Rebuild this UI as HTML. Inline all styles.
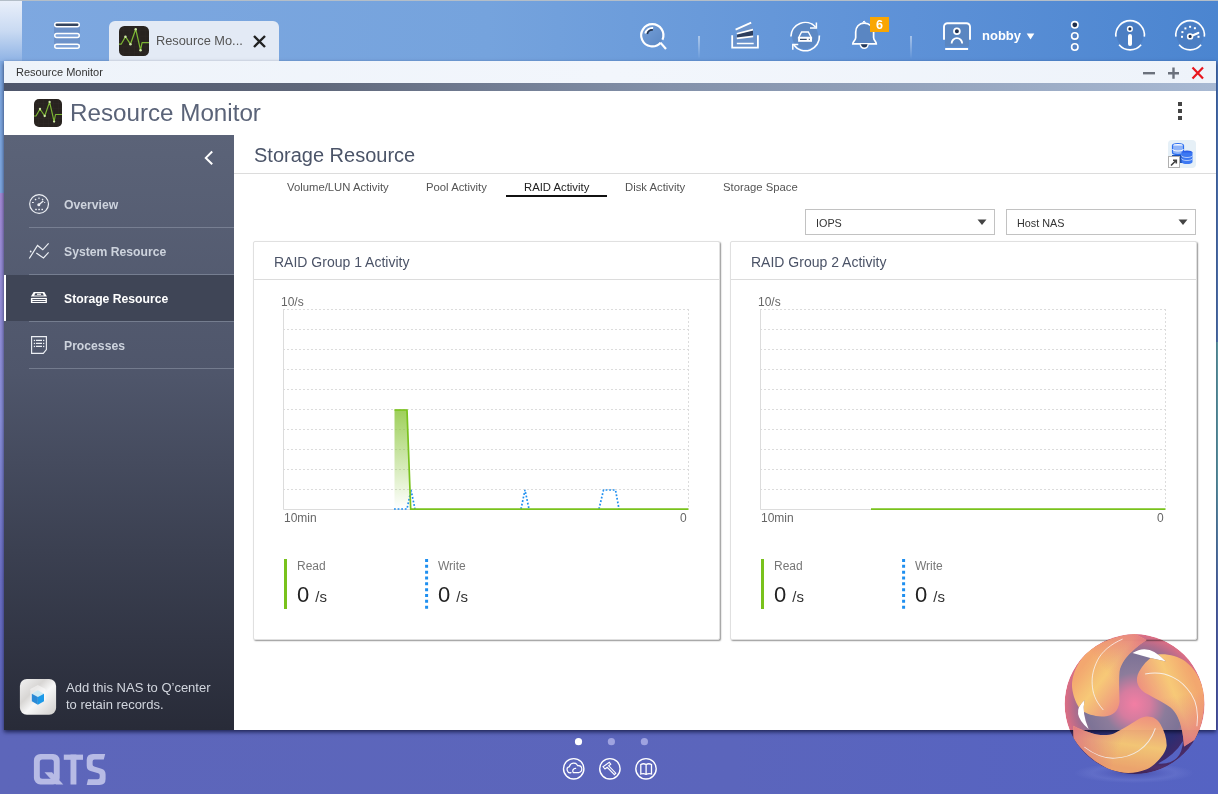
<!DOCTYPE html>
<html><head><meta charset="utf-8">
<style>
*{margin:0;padding:0;box-sizing:border-box;}
html,body{width:1218px;height:794px;overflow:hidden;}
body{position:relative;font-family:"Liberation Sans",sans-serif;background:#5f67bc;}
.a{position:absolute;}
.t{position:absolute;white-space:nowrap;line-height:1;}
#desk{left:0;top:0;width:1218px;height:794px;
 background:linear-gradient(180deg,#7ea8e0 0px,#7ea8e0 193px,#a68ad5 193px,#9a8fd8 260px,#8a90da 420px,#6d70c6 580px,#5f67bc 700px,#5f67bc 794px);}
#topbar{left:0;top:0;width:1218px;height:61px;
 background:linear-gradient(90deg,#7ea8e0 0%,#75a3dd 40%,#5d91d7 75%,#4b85d0 100%);}
#bottom{left:0;top:730px;width:1218px;height:64px;background:linear-gradient(90deg,#5d66ba 0%,#5b65bc 60%,#5563c3 100%);}
#win{left:4px;top:61px;width:1212px;height:669px;background:#fff;box-shadow:0 2px 4px rgba(10,15,50,.75);}
#wtitle{left:4px;top:61px;width:1212px;height:22px;background:linear-gradient(90deg,#eef3fa 0%,#f2f6fc 50%,#eef3fa 100%);}
#wbar{left:4px;top:83px;width:1212px;height:8px;background:linear-gradient(90deg,#4e566b 0%,#5f677a 25%,#8391aa 55%,#a8b9d3 100%);}
#side{left:4px;top:135px;width:230px;height:595px;background:linear-gradient(180deg,#5b6378 0%,#4f566b 40%,#3b4051 70%,#282b38 100%);}
.sep{position:absolute;left:29px;width:205px;height:1px;background:rgba(160,168,185,.45);}
.nav{position:absolute;left:64px;margin-top:1px;font-size:12.2px;font-weight:bold;color:#cdd3dd;line-height:1;white-space:nowrap;}
.panel{position:absolute;top:241px;width:467px;height:399px;background:#fff;border:1px solid #e0e0e0;border-radius:2px;box-shadow:1px 1px 1.5px rgba(0,0,0,.42);}
.tab{position:absolute;top:182px;font-size:11.3px;color:#555;line-height:1;white-space:nowrap;}
.dd{position:absolute;top:209px;width:190px;height:26px;border:1px solid #c2c2c2;background:#fff;}
.dd span{position:absolute;left:10px;top:7px;font-size:10.8px;color:#333;}
.ptitle{position:absolute;top:255px;font-size:14px;color:#4b5367;line-height:1;white-space:nowrap;}
.lbl{position:absolute;font-size:12px;color:#666;line-height:1;white-space:nowrap;}
</style></head><body>
<div id="desk" class="a"></div>
<div id="topbar" class="a"></div>
<div class="a" style="left:0;top:0;width:1218px;height:1px;background:#b4bec8;"></div>
<div class="a" style="left:0;top:1px;width:22px;height:60px;background:linear-gradient(180deg,#e9effa 0%,#c9daf2 50%,#8fb3e5 100%);"></div>
<div id="bottom" class="a"></div>

<!-- tab -->
<div class="a" style="left:109px;top:21px;width:170px;height:40px;background:#e3eaf5;border-radius:6px 6px 0 0;"></div>
<div class="t" style="left:156px;top:35px;font-size:12.8px;color:#555;">Resource Mo...</div>

<div class="a" style="left:1216px;top:61px;width:2px;height:669px;background:linear-gradient(180deg,#4f7dc3 0px,#5a80bf 281px,#6cb0b5 281px,#68aab5 420px,#5a70b8 540px,#5660b8 669px);"></div>
<div id="win" class="a"></div>
<div id="wtitle" class="a"></div>
<div class="t" style="left:16px;top:67px;font-size:11px;color:#333;">Resource Monitor</div>
<div id="wbar" class="a"></div>

<div id="side" class="a"></div>
<div class="sep" style="top:227px"></div>
<div class="sep" style="top:274px"></div>
<div class="sep" style="top:321px"></div>
<div class="sep" style="top:368px"></div>
<div class="a" style="left:4px;top:275px;width:230px;height:46px;background:#3f4556;"></div>
<div class="a" style="left:4px;top:275px;width:2px;height:46px;background:#fff;"></div>
<div class="nav" style="top:198px">Overview</div>
<div class="nav" style="top:245px">System Resource</div>
<div class="nav" style="top:292px;color:#fff">Storage Resource</div>
<div class="nav" style="top:339px">Processes</div>
<div class="t" style="left:66px;top:679px;font-size:13px;color:#d2d6de;line-height:17px;">Add this NAS to Q’center<br>to retain records.</div>

<div class="t" style="left:70px;top:101px;font-size:24.2px;color:#5a6378;">Resource Monitor</div>
<div class="t" style="left:254px;top:145px;font-size:20px;color:#4b5468;">Storage Resource</div>
<div class="a" style="left:234px;top:173px;width:982px;height:1px;background:#dcdcdc;"></div>

<div class="tab" style="left:287px">Volume/LUN Activity</div>
<div class="tab" style="left:426px">Pool Activity</div>
<div class="tab" style="left:524px;color:#222">RAID Activity</div>
<div class="tab" style="left:625px">Disk Activity</div>
<div class="tab" style="left:723px">Storage Space</div>
<div class="a" style="left:506px;top:195px;width:101px;height:2px;background:#111;"></div>

<div class="dd" style="left:805px"><span>IOPS</span></div>
<div class="dd" style="left:1006px"><span>Host NAS</span></div>

<div class="panel" style="left:253px"></div>
<div class="panel" style="left:730px"></div>
<div class="a" style="left:254px;top:279px;width:465px;height:1px;background:#dcdcdc;"></div>
<div class="a" style="left:731px;top:279px;width:465px;height:1px;background:#dcdcdc;"></div>
<div class="ptitle" style="left:274px">RAID Group 1 Activity</div>
<div class="ptitle" style="left:751px">RAID Group 2 Activity</div>

<div class="lbl" style="left:281px;top:296px">10/s</div>
<div class="lbl" style="left:284px;top:512px">10min</div>
<div class="lbl" style="left:680px;top:512px">0</div>
<div class="lbl" style="left:758px;top:296px">10/s</div>
<div class="lbl" style="left:761px;top:512px">10min</div>
<div class="lbl" style="left:1157px;top:512px">0</div>


<div class="t" style="left:982px;top:29px;font-size:13px;font-weight:bold;color:#fff;">nobby</div>
<div class="lbl" style="left:297px;top:560px;color:#777">Read</div>
<div class="lbl" style="left:438px;top:560px;color:#777">Write</div>
<div class="lbl" style="left:774px;top:560px;color:#777">Read</div>
<div class="lbl" style="left:915px;top:560px;color:#777">Write</div>
<div class="t" style="left:297px;top:584px;font-size:22px;color:#222;">0 <span style="font-size:15px;color:#333">/s</span></div>
<div class="t" style="left:438px;top:584px;font-size:22px;color:#222;">0 <span style="font-size:15px;color:#333">/s</span></div>
<div class="t" style="left:774px;top:584px;font-size:22px;color:#222;">0 <span style="font-size:15px;color:#333">/s</span></div>
<div class="t" style="left:915px;top:584px;font-size:22px;color:#222;">0 <span style="font-size:15px;color:#333">/s</span></div>

<svg class="a" style="left:0;top:0" width="1218" height="794" viewBox="0 0 1218 794">
<defs>
 <symbol id="rmicon" viewBox="0 0 28 28">
  <rect x="0" y="0" width="28" height="28" rx="5" fill="#28231f"/>
  <g stroke="#3a3532" stroke-width=".4" opacity=".5">
   <path d="M4.5 0V28M9.5 0V28M14.5 0V28M19.5 0V28M24.5 0V28M0 4.5H28M0 9.5H28M0 14.5H28M0 19.5H28M0 24.5H28"/>
  </g>
  <polyline points="0,17 2,17 6,10 10.7,17 15.6,3 20.1,22.6 21.5,15.5 28,15.5" fill="none" stroke="#7cb534" stroke-width="1.15" stroke-linejoin="round"/>
  <g fill="#d0e8a8"><circle cx="6" cy="10" r="1.15"/><circle cx="10.7" cy="17" r="1.15"/><circle cx="15.6" cy="3" r="1.15"/><circle cx="20.1" cy="22.6" r="1.15"/></g>
 </symbol>
 <linearGradient id="gfill" x1="0" y1="0" x2="0" y2="1">
  <stop offset="0" stop-color="#8cc73c" stop-opacity=".85"/>
  <stop offset="1" stop-color="#8cc73c" stop-opacity="0"/>
 </linearGradient>
 <linearGradient id="sepg" x1="0" y1="0" x2="0" y2="1">
  <stop offset="0" stop-color="#fff" stop-opacity=".9"/>
  <stop offset="1" stop-color="#fff" stop-opacity="0"/>
 </linearGradient>
</defs>

<!-- hamburger -->
<rect x="54" y="26" width="26" height="18" fill="#6a8ec6" opacity=".85"/>
<rect x="54.75" y="22.75" width="24.5" height="4" rx="2" fill="#34445e" stroke="#fff" stroke-width="1.5"/>
<rect x="54.75" y="33.5" width="24.5" height="4" rx="2" fill="#7ea2d8" stroke="#fff" stroke-width="1.5"/>
<rect x="54.75" y="44.25" width="24.5" height="4" rx="2" fill="#7ea2d8" stroke="#fff" stroke-width="1.5"/>

<!-- tab icon + close -->
<use href="#rmicon" x="119" y="26" width="30" height="30"/>
<path d="M254 36L265 47M265 36L254 47" stroke="#222" stroke-width="2.4"/>

<!-- search -->
<defs><linearGradient id="srchg" x1="0" y1="0" x2="1" y2="1"><stop offset="0" stop-color="#76a0d9"/><stop offset="1" stop-color="#5a87c3"/></linearGradient></defs>
<circle cx="652.3" cy="35.3" r="11" fill="url(#srchg)"/>
<path d="M660.57 42.7A11.1 11.1 0 1 1 662.46 39.76" fill="none" stroke="#fff" stroke-width="2.2"/>
<path d="M660.4 42.6L666 49" stroke="#fff" stroke-width="2.2"/>
<path d="M645.3 33.6A7.2 7.2 0 0 1 653.1 28.1" fill="none" stroke="#fff" stroke-width="2"/>
<path d="M647.3 33.9A5.4 5.4 0 0 1 652.9 30" fill="none" stroke="#26354f" stroke-width="1.7"/>

<rect x="698.5" y="36" width="1" height="23" fill="url(#sepg)"/>
<rect x="910.5" y="36" width="1" height="23" fill="url(#sepg)"/>

<!-- tray -->
<rect x="733" y="36" width="24" height="11" fill="#6a92cb"/>
<polygon points="736,30 751,23 753,30 737,34" fill="#6d95cd"/>
<polygon points="737,34 753,30 753,36.4 737,38.2" fill="#2d3e5e"/>
<path d="M735.6 29.6L751.2 22.6M736.8 33.8L753 29.6M736.8 38.4L753.2 36.4" stroke="#fff" stroke-width="1.7"/>
<path d="M736.8 43.5H753.7" stroke="#fff" stroke-width="1.5"/>
<path d="M732.2 35.2V47.7H757.9V35.2" fill="none" stroke="#fff" stroke-width="1.8"/>

<!-- sync -->
<circle cx="805.1" cy="36" r="13" fill="#5d89c4"/>
<path d="M790.9 36.6A14.2 14.2 0 0 1 815.5 27" fill="none" stroke="#fff" stroke-width="1.6"/>
<path d="M819.4 35.5A14.2 14.2 0 0 1 793.8 45" fill="none" stroke="#fff" stroke-width="1.6"/>
<path d="M816.4 22.5V28H810M792.8 49.7V44.5H798.3" fill="none" stroke="#fff" stroke-width="1.5"/>
<path d="M801.6 32H808.3L811.3 37.5H798.7Z" fill="none" stroke="#fff" stroke-width="1.4"/>
<rect x="798.1" y="37" width="13.9" height="4.8" fill="#fff"/>
<rect x="800" y="38.8" width="6.7" height="1.1" fill="#23395b"/>
<rect x="808.8" y="38.8" width="1" height="1.1" fill="#23395b"/>

<!-- bell -->
<path d="M864.1 23.2C859 23.2 855.7 27 855.7 32V37.5C855.7 40.5 852.8 41.5 852.8 43.9H876.3C876.3 41.5 873.6 40.5 873.6 37.5V32C873.6 27 869.3 23.2 864.1 23.2Z" fill="#5a86c2" stroke="#fff" stroke-width="1.7"/>
<path d="M862.5 22.5L864.1 21L865.7 22.5" fill="#fff" stroke="#fff" stroke-width="1"/>
<path d="M860.3 44.3A3.9 4 0 0 0 868.1 44.3" fill="#23395b" stroke="#fff" stroke-width="1.5"/>
<rect x="870" y="17" width="19" height="15" fill="#f9a602"/>
<text x="879.5" y="29" font-family="Liberation Sans" font-size="12.5" font-weight="bold" fill="#fff" text-anchor="middle">6</text>

<!-- user -->
<rect x="945" y="24.1" width="24.1" height="22.5" fill="#5a86c1"/>
<path d="M944 39.7V26.7A3.5 3.5 0 0 1 947.5 23.2H966.5A3.5 3.5 0 0 1 970 26.7V39.7" fill="none" stroke="#fff" stroke-width="1.9"/>
<rect x="945.2" y="48" width="22.9" height="2" fill="#fff"/>
<circle cx="956.9" cy="31.3" r="2.9" fill="#1f2f4d" stroke="#fff" stroke-width="1.8"/>
<path d="M951.6 43.5A5.3 5.3 0 0 1 962.2 43.5" fill="none" stroke="#fff" stroke-width="1.8"/>
<path d="M1026.7 33.5H1034.3L1030.5 39.5Z" fill="#fff"/>

<!-- dots -->
<rect x="1071" y="25" width="7.6" height="22" fill="#4f7fc0" opacity=".6"/>
<circle cx="1074.8" cy="24.8" r="3.2" fill="#1f2f4d" stroke="#fff" stroke-width="1.6"/>
<circle cx="1074.8" cy="35.9" r="3.2" fill="#5582c3" stroke="#fff" stroke-width="1.6"/>
<circle cx="1074.8" cy="47" r="3.2" fill="#5582c3" stroke="#fff" stroke-width="1.6"/>

<!-- info -->
<circle cx="1130.1" cy="35.7" r="13.2" fill="#4b7ec3"/>
<path d="M1115.9 36.6A14.3 14.3 0 1 1 1144.3 36.6" fill="none" stroke="#fff" stroke-width="1.6"/>
<path d="M1119.1 44.7A14.3 14.3 0 0 0 1141.1 44.7" fill="none" stroke="#fff" stroke-width="1.6"/>
<circle cx="1129.9" cy="28.9" r="2.3" fill="#1f2f4d" stroke="#fff" stroke-width="1.5"/>
<path d="M1130 36V44" stroke="#fff" stroke-width="4" stroke-linecap="round"/>

<!-- dashboard -->
<circle cx="1190.1" cy="35.7" r="13.2" fill="#4b7ec3"/>
<path d="M1175.9 36.6A14.3 14.3 0 1 1 1204.3 36.6" fill="none" stroke="#fff" stroke-width="1.6"/>
<path d="M1179.1 44.7A14.3 14.3 0 0 0 1201.1 44.7" fill="none" stroke="#fff" stroke-width="1.6"/>
<g fill="#fff"><rect x="1181" y="35.8" width="2" height="2"/><rect x="1181.4" y="31.1" width="2" height="2"/><rect x="1184.4" y="27.4" width="2" height="2"/><rect x="1189.1" y="25.8" width="2" height="2"/><rect x="1193.9" y="27.2" width="2" height="2"/><rect x="1197.5" y="35.8" width="2" height="2"/></g>
<path d="M1190.1 36.4L1198.3 33" stroke="#fff" stroke-width="2.2" stroke-linecap="round"/>
<circle cx="1190.1" cy="36.4" r="2.4" fill="#1f2f4d" stroke="#fff" stroke-width="1.6"/>

<!-- window buttons -->
<rect x="1143" y="72" width="12" height="2.4" fill="#6b717c"/>
<path d="M1168 73.2H1179M1173.5 67.5V78.7" stroke="#6b717c" stroke-width="2.4"/>
<path d="M1192.5 67.5L1203 78.5M1203 67.5L1192.5 78.5" stroke="#e8161e" stroke-width="2.2"/>

<!-- big app icon -->
<use href="#rmicon" x="34" y="99" width="28" height="28"/>
<g fill="#444"><rect x="1178" y="102" width="4" height="4"/><rect x="1178" y="109" width="4" height="4"/><rect x="1178" y="116" width="4" height="4"/></g>

<!-- sidebar chevron + icons -->
<path d="M212.2 151.5L205.8 157.9L212.2 164.3" fill="none" stroke="#fff" stroke-width="2"/>
<g stroke="#eceff4" fill="none" stroke-width="1.2">
 <circle cx="39.1" cy="204" r="9.4"/>
 <path d="M32 202.5H33.8M35 199L36.2 200.2M39 197.5V199M43.1 199L42 200.2M45.2 202.5H44.2"/>
 <path d="M38.8 204.7L43.3 201" stroke-width="1.4"/>
 <path d="M29.3 258.5L37.5 245.5L42.8 249.8L48.6 243.4M36.3 253.1L43.5 258L48.6 252.3"/>
</g>
<g fill="#eceff4"><circle cx="38.8" cy="204.7" r="1.5"/><rect x="35.2" y="208.8" width="1.6" height="1.4"/><rect x="38.3" y="208.8" width="1.6" height="1.4"/><rect x="41.4" y="208.8" width="1.6" height="1.4"/><circle cx="30.7" cy="251.5" r=".9"/></g>
<g>
 <path d="M33.7 291.9H44.3L46.9 296.4H30.9Z" fill="#fff"/>
 <path d="M35.4 293.3H42.8L43.8 295.4H34.2Z" fill="#3f4556"/>
 <rect x="37" y="293.6" width="4" height="1.4" fill="#ddd"/>
 <rect x="30.9" y="297.9" width="16" height="5.1" fill="#fff"/>
 <path d="M32.4 299.5H45.6M32.4 301.5H45.6" stroke="#3f4556" stroke-width=".9"/>
</g>
<g stroke="#eceff4" fill="none" stroke-width="1.15">
 <path d="M31.6 336.6H46.4V349.5L43.3 353.4H31.6Z"/>
 <path d="M36 340.4H42M36 343.4H42M36 346.4H42" stroke-width="1.3"/>
</g>
<g fill="#eceff4"><rect x="33.8" y="339.8" width="1.3" height="1.3"/><rect x="43" y="339.8" width="1.3" height="1.3"/><rect x="33.8" y="342.8" width="1.3" height="1.3"/><rect x="43" y="342.8" width="1.3" height="1.3"/><rect x="33.8" y="345.8" width="1.3" height="1.3"/><rect x="43" y="345.8" width="1.3" height="1.3"/></g>

<!-- storage resource shortcut icon -->
<rect x="1168" y="140" width="28" height="28" rx="4" fill="#e6f0f7"/>
<g>
 <ellipse cx="1178" cy="145.5" rx="5.5" ry="2" fill="#fff" stroke="#2a6ef0" stroke-width="1.2"/>
 <path d="M1172.5 145.5V152.5A5.5 2 0 0 0 1183.5 152.5V145.5" fill="#8fb4f8" stroke="#2a6ef0" stroke-width="1.2"/>
 <path d="M1172.5 149A5.5 2 0 0 0 1183.5 149" fill="none" stroke="#fff" stroke-width="1"/>
 <rect x="1172" y="155" width="12" height="8" fill="#1d4fb0"/>
 <ellipse cx="1187" cy="152.5" rx="5.5" ry="2" fill="#2a5ee8"/>
 <path d="M1181.5 152.5V162A5.5 2 0 0 0 1192.5 162V152.5" fill="#3c78f2"/>
 <path d="M1181.5 155.5A5.5 2 0 0 0 1192.5 155.5M1181.5 158.5A5.5 2 0 0 0 1192.5 158.5" fill="none" stroke="#bcd3fb" stroke-width=".9"/>
 <rect x="1168.5" y="156.5" width="11" height="11" fill="#fff" stroke="#b0b0b0" stroke-width="1"/>
 <path d="M1171 165.5L1176 160.5M1173 160.3H1176.3V163.6" fill="none" stroke="#444" stroke-width="1.6"/>
</g>

<!-- dropdown arrows -->
<path d="M977.5 219.5H986.5L982 225Z" fill="#444"/>
<path d="M1178.5 219.5H1187.5L1183 225Z" fill="#444"/>

<!-- charts: panel 1 -->
<g stroke="#dcdcdc" stroke-width="1" stroke-dasharray="2 2" fill="none">
 <path d="M283 309.5H688M283 329.5H688M283 349.5H688M283 369.5H688M283 389.5H688M283 409.5H688M283 429.5H688M283 449.5H688M283 469.5H688M283 489.5H688"/>
 <path d="M688.5 309V509"/>
 <path d="M760 309.5H1165M760 329.5H1165M760 349.5H1165M760 369.5H1165M760 389.5H1165M760 409.5H1165M760 429.5H1165M760 449.5H1165M760 469.5H1165M760 489.5H1165"/>
 <path d="M1165.5 309V509"/>
</g>
<path d="M283.5 309V509.5H688" fill="none" stroke="#dcdcdc" stroke-width="1"/>
<path d="M760.5 309V509.5H1165" fill="none" stroke="#dcdcdc" stroke-width="1"/>

<polygon points="394.5,509 394.5,409.5 407,409.5 411,509" fill="url(#gfill)"/>
<path d="M394 509H407L411 490L415 509M521 509L525 490L529 509M599 509L603.5 490H615.5L619 509" fill="none" stroke="#1e8ff0" stroke-width="1.7" stroke-dasharray="1.8 1.8"/>
<path d="M394.5 410H407L410.7 509.2H688.5" fill="none" stroke="#79c21c" stroke-width="1.7"/>
<path d="M871 509.2H1165.5" fill="none" stroke="#79c21c" stroke-width="1.7"/>

<!-- legends -->
<rect x="284" y="559" width="3" height="50" fill="#79c21c"/>
<path d="M426.6 559V610" stroke="#1e8ff0" stroke-width="3" stroke-dasharray="3 2.83"/>
<rect x="761" y="559" width="3" height="50" fill="#79c21c"/>
<path d="M903.6 559V610" stroke="#1e8ff0" stroke-width="3" stroke-dasharray="3 2.83"/>

<!-- q'center icon -->
<defs>
 <linearGradient id="silver" x1="0" y1="0" x2="1" y2="1">
  <stop offset="0" stop-color="#f2f2f2"/><stop offset=".35" stop-color="#d8d6d4"/><stop offset=".55" stop-color="#f7f7f7"/><stop offset="1" stop-color="#cfcdcb"/>
 </linearGradient>
</defs>
<rect x="19.9" y="678.9" width="36.2" height="35.9" rx="7" fill="url(#silver)"/>
<polygon points="37.9,685 45.5,689 45.5,700 37.9,705 30.3,700 30.3,689" fill="#fff" opacity=".45"/>
<polygon points="37.9,690.2 44,693.7 37.9,697 31.8,693.7" fill="#cdeaf4"/>
<polygon points="31.8,693.7 37.9,697 37.9,704.7 31.8,701.2" fill="#2a8ad6"/>
<polygon points="44,693.7 37.9,697 37.9,704.7 44,701.2" fill="#1d9ae8"/>

<!-- QTS -->
<g fill="#b7bbe5">
 <path fill-rule="evenodd" d="M40.4 753.9H53.2A6.5 6.5 0 0 1 59.7 760.4V778A6.5 6.5 0 0 1 53.2 784.5H40.4A6.5 6.5 0 0 1 33.9 778V760.4A6.5 6.5 0 0 1 40.4 753.9ZM42.3 759.6H51.3A2.5 2.5 0 0 1 53.8 762.1V776.3A2.5 2.5 0 0 1 51.3 778.8H42.3A2.5 2.5 0 0 1 39.8 776.3V762.1A2.5 2.5 0 0 1 42.3 759.6Z"/>
 <polygon points="44.5,772.3 52,772.3 63.3,784.5 55.8,784.5"/>
 <rect x="63.8" y="754.6" width="19.2" height="5.2"/>
 <rect x="70.5" y="754.6" width="5.9" height="29.9"/>
 <path d="M93 753.9H105.2L103.8 759.6H94.5Q92.6 759.6 92.6 761.5V764.5Q92.6 766 94.2 766.5L101.5 768.8Q105.6 770 105.6 774.5V779Q105.6 784.9 99.5 784.9H86.7L88 779.2H97.8Q99.7 779.2 99.7 777.3V775Q99.7 773.6 98.2 773.2L90.5 771Q86.7 770 86.7 765.5V760Q86.7 753.9 93 753.9Z"/>
</g>

<!-- pager dots + bottom icons -->
<circle cx="578.5" cy="741.7" r="3.6" fill="#fff"/>
<circle cx="611.4" cy="741.7" r="3.6" fill="#9fa3e0"/>
<circle cx="644.4" cy="741.7" r="3.6" fill="#9fa3e0"/>
<g fill="none" stroke="#fff" stroke-width="1.4">
 <circle cx="573.7" cy="768.8" r="10.2"/>
 <circle cx="609.9" cy="768.8" r="10.2"/>
 <circle cx="646" cy="768.8" r="10.2"/>
 <path d="M571 772.6A3.1 3.1 0 0 1 569.4 766.6A4.5 4.5 0 0 1 577.8 765.7A3 3 0 0 1 579 772.5H573.2A2.7 2.7 0 0 1 575.7 768.3" stroke-width="1.25" stroke-linecap="round"/>
 <path d="M603 766.7L609.3 762.3L610.8 764.2L608.7 765.9L615.8 773.2L614.4 774.7L607.2 767.3L605 769Z" stroke-width="1.1"/>
 <path d="M640.8 774V764.5Q643.5 763 646.1 764.5Q648.7 763 651.5 764.5V774Q648.7 773 646.1 774.3Q643.5 773 640.8 774ZM646.1 764.5V774.3" stroke-width="1.3"/>
</g>
</svg>

<svg class="a" style="left:1054px;top:624px" width="164" height="170" viewBox="0 0 164 170">
<defs>
 <radialGradient id="lg_base" cx="0" cy="0" r="70" gradientUnits="userSpaceOnUse">
  <stop offset="0" stop-color="#f27ea3"/>
  <stop offset=".22" stop-color="#d67c9f"/>
  <stop offset=".45" stop-color="#8c7c9b"/>
  <stop offset=".7" stop-color="#7d7396"/>
  <stop offset=".86" stop-color="#b06c8c"/>
  <stop offset="1" stop-color="#de6e84"/>
 </radialGradient>
 <radialGradient id="lg_shadow" cx="80" cy="149" r="60" gradientTransform="translate(0 149) scale(1 .17) translate(0 -149)" gradientUnits="userSpaceOnUse">
  <stop offset="0" stop-color="#3c4296" stop-opacity=".75"/>
  <stop offset=".45" stop-color="#5a64c0" stop-opacity=".4"/>
  <stop offset=".7" stop-color="#7480d4" stop-opacity=".35"/>
  <stop offset="1" stop-color="#7480d4" stop-opacity="0"/>
 </radialGradient>
 <linearGradient id="lg_lobe" x1="-58" y1="-30" x2="-14" y2="4" gradientUnits="userSpaceOnUse">
  <stop offset="0" stop-color="#f6ab6e"/>
  <stop offset=".42" stop-color="#ffcf76"/>
  <stop offset="1" stop-color="#f0907e"/>
 </linearGradient>
 <linearGradient id="lg_tail" x1="8" y1="-66" x2="-30" y2="-34" gradientUnits="userSpaceOnUse">
  <stop offset="0" stop-color="#e06a86" stop-opacity=".75"/>
  <stop offset="1" stop-color="#e06a86" stop-opacity="0"/>
 </linearGradient>
 <mask id="lg_mask" maskUnits="userSpaceOnUse" x="-80" y="-80" width="160" height="160">
  <rect x="-80" y="-80" width="160" height="160" fill="#000"/>
  <circle r="70" fill="#fff"/>
  <g fill="#000">
   <path d="M-2 -51Q14 -62 31.5 -42.5Q14 -46 -2 -51Z"/>
   <path d="M-50 -4Q-65 9 -46 25Q-53 9 -50 -4Z"/>
   <path d="M48.5 37Q47 61 23.5 59.5Q40 51 48.5 37Z"/>
  </g>
 </mask>
</defs>
<ellipse cx="80" cy="149" rx="60" ry="10" fill="url(#lg_shadow)"/>
</svg>
<svg class="a" style="left:1054px;top:624px;mix-blend-mode:multiply" width="164" height="170" viewBox="0 0 164 170">
<g transform="translate(80.6 80.1)">
 <circle r="70" fill="url(#lg_base)" mask="url(#lg_mask)"/>
</g>
</svg>
<svg class="a" style="left:1054px;top:624px" width="164" height="170" viewBox="0 0 164 170">
<defs>
 <g id="lg_extra">
  <path fill="url(#lg_tail)" d="M1 -69.8C-14 -69.5 -32 -63.5 -45 -53.5C-55 -45 -61 -34 -62.5 -22C-63.5 -12 -58 3 -51.9 7.1C-45 11 -38 12.4 -30 12.4C-22 12 -16 7 -15.1 -2.3C-15 -10 -16 -20 -15.1 -32.5C-14 -40 -8 -48 -2.8 -52.4C2 -57 6 -60 12 -64Z"/>
  <path d="M-12 -65C-24 -60 -33 -52 -37 -44C-41 -36 -43 -28 -42.4 -20C-42 -12 -40 -4 -31.3 5.9" fill="none" stroke="#fff" stroke-width=".9" opacity=".85"/>
 </g>
 <path id="lg_l1" fill="url(#lg_lobe)" d="M1 -69.8C-14 -69.5 -32 -63.5 -45 -53.5C-55 -45 -61 -34 -62.5 -22C-63.5 -12 -58 3 -51.9 7.1C-45 11 -38 12.4 -30 12.4C-22 12 -16 7 -15.1 -2.3C-15 -10 -16 -20 -15.1 -32.5C-14 -40 -8 -48 -2.8 -52.4C2 -57 6 -60 12 -64Z"/>
 <path id="lg_edge" d="M-15.1 -2.3C-15 -10 -16 -20 -15.1 -32.5C-14 -40 -8 -48 -2.8 -52.4" fill="none" stroke="#6f6a8e" stroke-width="1.6" opacity=".5"/>
</defs>
<g transform="translate(80.6 80.1)" opacity=".94">
 <g mask="url(#lg_mask)">
  <use href="#lg_l1"/>
  <use href="#lg_l1" transform="rotate(120)"/>
  <use href="#lg_l1" transform="rotate(240)"/>
  <use href="#lg_extra"/>
  <use href="#lg_extra" transform="rotate(120)"/>
  <use href="#lg_extra" transform="rotate(240)"/>
 </g>
</g>
</svg>

</body></html>
